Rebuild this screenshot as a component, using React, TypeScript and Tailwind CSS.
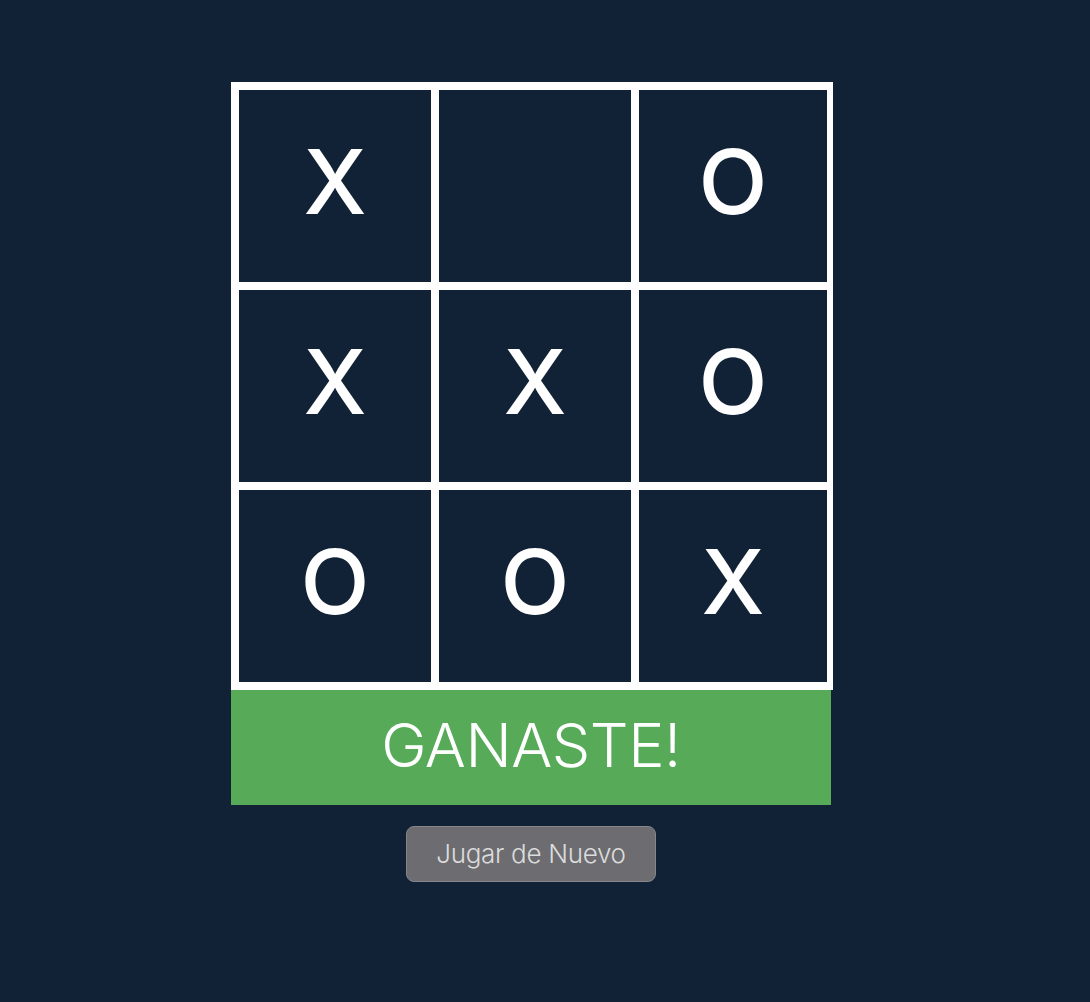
import React, { useState } from 'react';

type Cell = 'X' | 'O' | null;

const START: Cell[] = ['X', null, 'O', 'X', 'X', 'O', 'O', 'O', 'X'];

const App: React.FC = () => {
  const [board, setBoard] = useState<Cell[]>(START);

  return (
    <div
      className="min-h-[1002px] w-full bg-[#122236] text-white"
      style={{ fontFamily: 'Inter, "Noto Sans", sans-serif' }}
    >
      <div className="ml-[231px] pt-[82px] w-[602px] flex flex-col">
        <div className="w-[602px] bg-white pl-2 pt-2 pb-2 pr-1.5 grid grid-cols-[192px_192px_188px] grid-rows-[192px_192px_192px] gap-2">
          {board.map((cell, i) => (
            <div
              key={i}
              className="bg-[#122236] flex items-center justify-center pb-2 text-[90px] leading-none font-medium"
            >
              {cell}
            </div>
          ))}
        </div>

        <div className="w-[600px] h-[115px] bg-[#56aa58] flex items-center justify-center pb-1">
          <span className="text-[61px] font-light tracking-[-0.5px] leading-none">GANASTE!</span>
        </div>

        <div className="w-[600px] flex justify-center mt-[21px]">
          <button
            onClick={() => setBoard(Array(9).fill(null))}
            className="w-[250px] h-[56px] rounded-lg bg-[#6c6c71] border border-[#85858a] text-[#dcdcdc] text-[26px] font-light tracking-[-0.3px] leading-none"
          >
            Jugar de Nuevo
          </button>
        </div>
      </div>
    </div>
  );
};

export default App;
